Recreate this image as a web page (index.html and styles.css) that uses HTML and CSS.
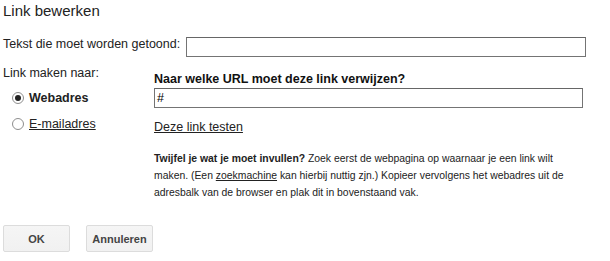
FILE: index.html
```html
<!DOCTYPE html>
<html lang="nl">
<head>
<meta charset="utf-8">
<title>Link bewerken</title>
<link rel="stylesheet" href="styles.css">
</head>
<body>
<div class="dialog">
  <div class="title">Link bewerken</div>
  <div class="text-row">
    <label class="text-label">Tekst die moet worden getoond:</label>
    <div class="field text-field"></div>
  </div>
  <div class="main">
    <div class="left">
      <div class="make-label">Link maken naar:</div>
      <div class="option first">
        <span class="radio on"></span>
        <span class="opt-text bold">Webadres</span>
      </div>
      <div class="option second">
        <span class="radio"></span>
        <a class="opt-text link">E-mailadres</a>
      </div>
    </div>
    <div class="right">
      <div class="question">Naar welke URL moet deze link verwijzen?</div>
      <div class="field url-field">#</div>
      <a class="test-link">Deze link testen</a>
      <p class="help"><b>Twijfel je wat je moet invullen?</b> Zoek eerst de webpagina op waarnaar je een link wilt<br>maken. (Een <a class="link">zoekmachine</a> kan hierbij nuttig zjn.) Kopieer vervolgens het webadres uit de<br>adresbalk van de browser en plak dit in bovenstaand vak.</p>
    </div>
  </div>
  <div class="buttons">
    <button class="btn">OK</button>
    <button class="btn">Annuleren</button>
  </div>
</div>
</body>
</html>
```
FILE: styles.css
```css
html, body {
  margin: 0;
  padding: 0;
  background: #fff;
}
body {
  font-family: "Liberation Sans", Arial, sans-serif;
  color: #222;
}
.dialog {
  padding: 2px 0 0 3px;
}
.title {
  font-size: 15px;
  line-height: 18px;
  color: #222;
}
.text-row {
  display: flex;
  align-items: flex-start;
  margin-top: 16px;
}
.text-label {
  font-size: 12.5px;
  line-height: 16px;
  width: 183px;
  flex: none;
  white-space: nowrap;
}
.field {
  box-sizing: border-box;
  height: 20px;
  border: 1px solid #747474;
  border-top-color: #666;
  background: #fff;
  font-size: 12.5px;
  line-height: 18px;
  padding-left: 2px;
  color: #000;
}
.text-field {
  width: 400px;
  margin-top: 1px;
}
.main {
  display: flex;
  margin-top: 8px;
}
.left {
  width: 151px;
  flex: none;
}
.make-label {
  font-size: 12.5px;
  line-height: 16px;
  white-space: nowrap;
}
.option {
  display: flex;
  align-items: center;
  padding-left: 9px;
  font-size: 12.5px;
  line-height: 16px;
  white-space: nowrap;
}
.option.first {
  margin-top: 9px;
}
.option.second {
  margin-top: 10px;
}
.radio {
  box-sizing: border-box;
  width: 12px;
  height: 12px;
  border: 1px solid #8e8e8e;
  border-radius: 50%;
  background: #fff;
  margin-right: 5px;
  display: flex;
  align-items: center;
  justify-content: center;
  flex: none;
}
.radio.on::after {
  content: "";
  width: 6px;
  height: 6px;
  border-radius: 50%;
  background: #222;
}
.bold {
  font-weight: bold;
}
.link {
  color: #222;
  text-decoration: underline;
}
.right {
  width: 429px;
  display: flex;
  flex-direction: column;
  align-items: flex-start;
}
.question {
  font-size: 12.5px;
  line-height: 16px;
  font-weight: bold;
  margin-top: 6px;
  color: #111;
  white-space: nowrap;
}
.url-field {
  width: 429px;
  margin-top: 1px;
}
.test-link {
  font-size: 12.5px;
  line-height: 16px;
  margin-top: 11px;
  color: #222;
  text-decoration: underline;
}
.help {
  width: 445px;
  flex: none;
  font-size: 10.4px;
  line-height: 17px;
  margin: 15px 0 0 0;
  color: #222;
}
.buttons {
  display: flex;
  gap: 16px;
  margin-top: 24px;
}
.btn {
  box-sizing: border-box;
  width: 67px;
  height: 27px;
  padding: 0;
  border: 1px solid #dcdcdc;
  border-radius: 2px;
  background: linear-gradient(#f5f5f5, #f1f1f1);
  font-family: "Liberation Sans", Arial, sans-serif;
  font-size: 11px;
  font-weight: bold;
  color: #444;
}
```
